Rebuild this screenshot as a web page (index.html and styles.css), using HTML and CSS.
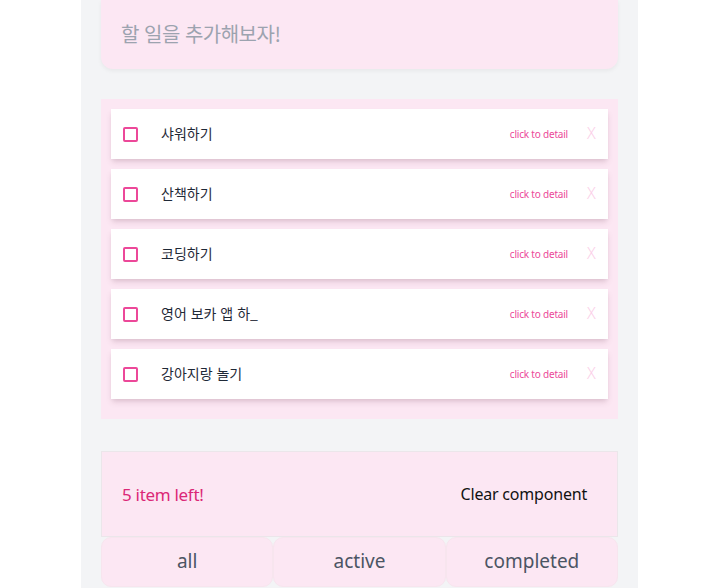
FILE: index.html
```html
<!DOCTYPE html>
<html lang="ko">
<head>
<meta charset="utf-8">
<link rel="stylesheet" href="styles.css">
</head>
<body>
<div class="page">
  <div class="input-box">
    <span class="placeholder">할 일을 추가해보자!</span>
  </div>

  <ul class="list">
    <li class="item"><span class="check"></span><span class="title">샤워하기</span><span class="detail">click to detail</span><span class="del">X</span></li>
    <li class="item"><span class="check"></span><span class="title">산책하기</span><span class="detail">click to detail</span><span class="del">X</span></li>
    <li class="item"><span class="check"></span><span class="title">코딩하기</span><span class="detail">click to detail</span><span class="del">X</span></li>
    <li class="item"><span class="check"></span><span class="title">영어 보카 앱 하_</span><span class="detail">click to detail</span><span class="del">X</span></li>
    <li class="item"><span class="check"></span><span class="title">강아지랑 놀기</span><span class="detail">click to detail</span><span class="del">X</span></li>
  </ul>

  <div class="footer">
    <div class="footer-top">
      <span class="left">5 item left!</span>
      <span class="clear">Clear component</span>
    </div>
    <div class="filters">
      <button class="filter">all</button>
      <button class="filter">active</button>
      <button class="filter">completed</button>
    </div>
  </div>
</div>
</body>
</html>
```

FILE: styles.css
```css
html, body {
  margin: 0;
  padding: 0;
  background: #ffffff;
  overflow: hidden;
}
body {
  font-family: "Noto Sans", "Noto Sans CJK KR", sans-serif;
}
.page {
  width: 557px;
  margin-left: 81px;
  box-sizing: border-box;
  padding: 0 20px;
  background: #f3f4f6;
  min-height: 588px;
}
.input-box {
  height: 69px;
  background: #fce7f3;
  border-radius: 0 0 12px 12px;
  box-shadow: 0 2px 4px rgba(0,0,0,0.05);
  display: flex;
  align-items: center;
  padding-left: 20px;
  padding-bottom: 3px;
  box-sizing: border-box;
}
.placeholder {
  font-family: "Noto Sans CJK KR", sans-serif;
  font-size: 20px;
  color: #9ca3af;
  letter-spacing: -0.5px;
}
.list {
  list-style: none;
  margin: 30px 0 0 0;
  padding: 10px 10px 20px 10px;
  background: #fce7f3;
  display: flex;
  flex-direction: column;
  gap: 10px;
}
.item {
  height: 50px;
  background: #ffffff;
  display: flex;
  align-items: center;
  padding: 0 10px 0 12px;
  box-shadow: 0 4px 6px -1px rgba(120, 60, 90, 0.18), 0 2px 4px -1px rgba(0,0,0,0.06);
}
.check {
  width: 11px;
  height: 11px;
  border: 2px solid #ec4899;
  border-radius: 2px;
  flex: none;
}
.title {
  margin-left: 23px;
  font-family: "Noto Sans CJK KR", sans-serif;
  font-size: 14px;
  color: #1f2937;
  flex: 1;
  padding-bottom: 3px;
}
.detail {
  font-size: 10px;
  color: #ec4899;
  letter-spacing: -0.2px;
  padding-bottom: 1px;
}
.del {
  margin-left: 19px;
  width: 11px;
  font-size: 16px;
  font-weight: 300;
  color: #fbcfe8;
  padding-bottom: 2px;
}
.footer {
  margin-top: 32px;
}
.footer-top {
  height: 84px;
  border: 1px solid #ebe6ea;
  background: #fce7f3;
  display: flex;
  align-items: center;
  justify-content: space-between;
  padding: 0 30px 0 20px;
}
.left {
  font-size: 17px;
  color: #db2777;
  letter-spacing: -0.3px;
}
.clear {
  font-size: 16px;
  color: #111111;
  letter-spacing: -0.2px;
}
.filters {
  display: grid;
  grid-template-columns: 1fr 1fr 1fr;
}
.filter {
  height: 50px;
  background: #fce7f3;
  border: 1px solid #f7e5ee;
  border-radius: 10px;
  font-family: "Noto Sans", sans-serif;
  font-size: 19px;
  color: #4b5563;
  padding: 0 0 2px 0;
}
```
